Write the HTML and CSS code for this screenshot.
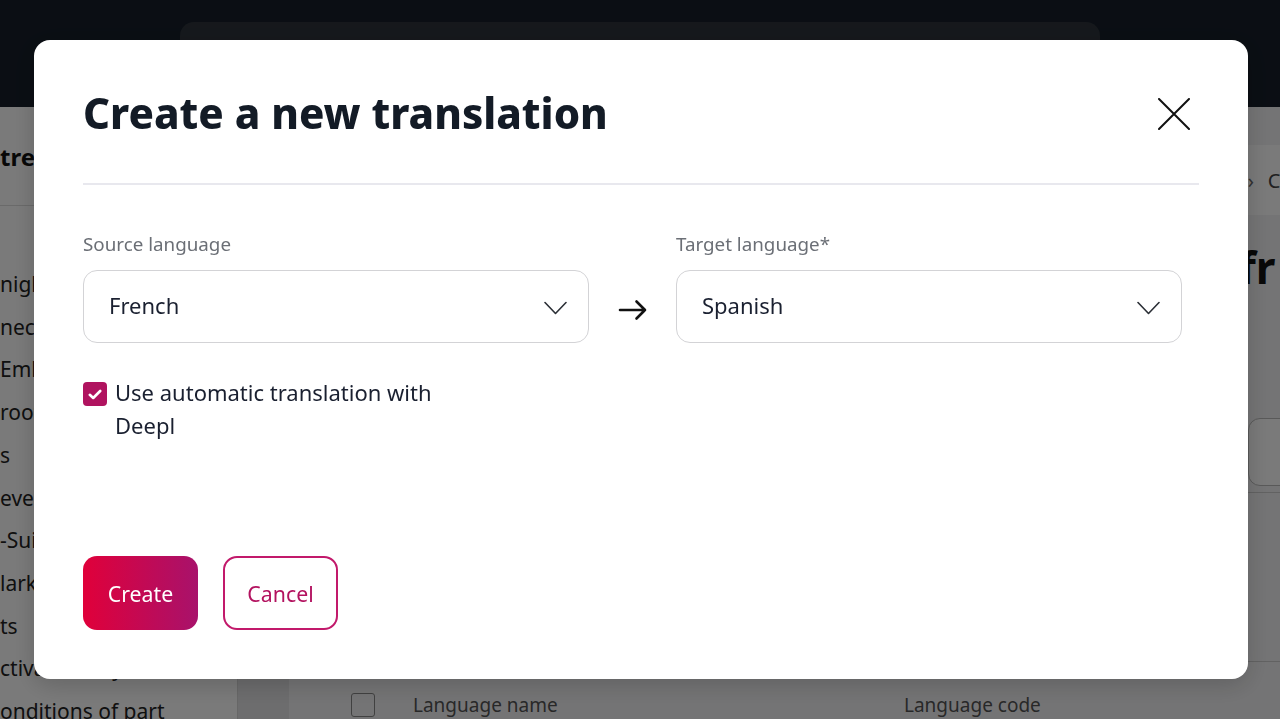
FILE: index.html
```html
<!DOCTYPE html>
<html lang="en">
  <head>
    <meta charset="UTF-8" />
    <meta name="viewport" content="width=device-width, initial-scale=1.0" />
    <title>Create a new translation</title>
    <link rel="stylesheet" href="styles.css">
  </head>
  <body>
    <header class="topbar">
      <div class="search-bar"></div>
    </header>

    <div class="layout">
      <aside class="sidebar">
        <div class="sidebar-title">tree</div>
        <ul class="sidebar-list">
          <li>nights</li>
          <li>nection</li>
          <li>Embed</li>
          <li>rooting</li>
          <li>s</li>
          <li>events</li>
          <li>-Suite</li>
          <li>larkets</li>
          <li>ts</li>
          <li>ctivation key</li>
          <li>onditions of part</li>
        </ul>
      </aside>
      <div class="rail"></div>
      <main class="main">
        <nav class="breadcrumb">
          <span>Pages</span>
          <span class="sep">&rsaquo;</span>
          <span>Translations</span>
          <span class="sep">&rsaquo;</span>
          <span>Content</span>
        </nav>
        <h1 class="page-title">Translations of the homepage fr</h1>
        <div class="toolbar">
          <div class="toolbar-box"></div>
        </div>
        <div class="table">
          <div class="table-head">
            <span class="table-check"></span>
            <span class="col-name">Language name</span>
            <span class="col-code">Language code</span>
          </div>
        </div>
      </main>
    </div>

    <div class="overlay">
      <div class="modal">
        <div class="modal-header">
          <h2 class="modal-title">Create a new translation</h2>
          <button class="close-btn" aria-label="Close">
            <svg width="32" height="32" viewBox="0 0 32 32" fill="none" stroke="#111" stroke-width="2" stroke-linecap="round">
              <path d="M1 1 L31 31 M31 1 L1 31" />
            </svg>
          </button>
        </div>

        <div class="modal-body">
          <div class="lang-row">
            <div class="field">
              <label class="field-label">Source language</label>
              <div class="select">
                <span>French</span>
                <svg class="chevron" width="23" height="14" viewBox="0 0 23 14" fill="none" stroke="#2b2f36" stroke-width="1.6" stroke-linecap="round" stroke-linejoin="round">
                  <path d="M1 1.5 L11.5 12.5 L22 1.5" />
                </svg>
              </div>
            </div>
            <div class="arrow">
              <svg width="30" height="22" viewBox="0 0 30 22" fill="none" stroke="#111" stroke-width="2.6" stroke-linecap="round" stroke-linejoin="round">
                <path d="M2 11 H27 M18.5 2.5 L27 11 L18.5 19.5" />
              </svg>
            </div>
            <div class="field">
              <label class="field-label">Target language*</label>
              <div class="select">
                <span>Spanish</span>
                <svg class="chevron" width="23" height="14" viewBox="0 0 23 14" fill="none" stroke="#2b2f36" stroke-width="1.6" stroke-linecap="round" stroke-linejoin="round">
                  <path d="M1 1.5 L11.5 12.5 L22 1.5" />
                </svg>
              </div>
            </div>
          </div>

          <label class="checkbox">
            <span class="checkbox-box">
              <svg width="14" height="11" viewBox="0 0 14 11" fill="none" stroke="#fff" stroke-width="2.6" stroke-linecap="round" stroke-linejoin="round">
                <path d="M1.8 5.8 L5.2 9 L12.2 2" />
              </svg>
            </span>
            <span class="checkbox-text">Use automatic translation with Deepl</span>
          </label>
        </div>

        <div class="modal-footer">
          <button class="btn btn-primary">Create</button>
          <button class="btn btn-outline">Cancel</button>
        </div>
      </div>
    </div>
  </body>
</html>
```

FILE: styles.css
```css
body {
  font-family: "Noto Sans", "Open Sans", sans-serif;
  margin: 0;
  padding: 0;
  height: 100vh;
  overflow: hidden;
  background-color: #f3f3f5;
  color: #1a202c;
}
.topbar {
  height: 107px;
  background-color: #171f2a;
  padding-top: 22px;
  box-sizing: border-box;
}
.search-bar {
  margin-left: 180px;
  width: 920px;
  height: 64px;
  border-radius: 14px;
  background-color: #2e343c;
}
.layout {
  display: flex;
  height: calc(100vh - 107px);
}
.sidebar {
  width: 237px;
  background-color: #fff;
  flex-shrink: 0;
}
.sidebar-title {
  font-size: 24px;
  font-weight: bold;
  height: 98px;
  line-height: 100px;
  border-bottom: 1px solid #ddd;
  color: #111;
}
.sidebar-list {
  list-style: none;
  margin: 0;
  padding: 57px 0 0;
}
.sidebar-list li {
  font-size: 21px;
  line-height: 42.7px;
  color: #222;
  white-space: nowrap;
}
.rail {
  width: 51px;
  background-color: #e4e4e6;
  border-left: 1px solid #d8d8d8;
  flex-shrink: 0;
}
.main {
  flex: 1;
  display: flex;
  flex-direction: column;
  min-width: 0;
  overflow: hidden;
}
.main > * {
  flex-shrink: 0;
}
.breadcrumb {
  margin-top: 38px;
  height: 70px;
  background-color: #fff;
  display: flex;
  align-items: center;
  padding-left: 744px;
  font-size: 20px;
  color: #444;
  white-space: nowrap;
}
.breadcrumb .sep {
  margin: 0 14px 0 12px;
  color: #666;
}
.page-title {
  margin: 22px 0 0 283px;
  font-size: 44px;
  font-weight: bold;
  color: #111;
  white-space: nowrap;
}
.toolbar {
  margin-top: 121px;
  display: flex;
  justify-content: flex-end;
  padding-bottom: 6px;
  border-bottom: 1px solid #ccc;
}
.toolbar-box {
  width: 60px;
  height: 66px;
  margin-right: -30px;
  border: 1px solid #bbb;
  border-radius: 12px;
  background-color: #fff;
}
.table {
  margin-top: 168px;
  border-top: 1px solid #ccc;
}
.table-head {
  display: flex;
  align-items: center;
  height: 85px;
  padding-left: 62px;
  font-size: 19px;
  color: #555;
}
.table-check {
  width: 22px;
  height: 22px;
  border: 1.5px solid #888;
  border-radius: 3px;
  margin-right: 38px;
}
.col-name {
  width: 491px;
}

/* modal */
.overlay {
  position: fixed;
  inset: 0;
  background-color: rgba(0, 0, 0, 0.52);
  display: flex;
  align-items: center;
  justify-content: center;
}
.modal {
  width: 1214px;
  height: 639px;
  margin-left: 2px;
  background-color: #fff;
  border-radius: 16px;
  padding: 49px;
  box-sizing: border-box;
  display: flex;
  flex-direction: column;
  box-shadow: 0 6px 24px rgba(0, 0, 0, 0.18);
}
.modal-header {
  display: flex;
  align-items: center;
  justify-content: space-between;
  height: 48px;
  padding: 0 9px 46px 0;
  border-bottom: 2px solid #e8e8ee;
}
.modal-title {
  margin: 0;
  font-size: 42px;
  font-weight: 800;
  line-height: 48px;
  color: #131b26;
}
.close-btn {
  background: none;
  border: none;
  padding: 0;
  width: 32px;
  height: 32px;
  margin-top: 2px;
  cursor: pointer;
}
.close-btn svg {
  display: block;
}
.modal-body {
  padding-top: 47px;
}
.lang-row {
  display: grid;
  grid-template-columns: 506px 87px 506px;
  align-items: end;
}
.field {
  display: flex;
  flex-direction: column;
}
.field-label {
  font-size: 18.8px;
  line-height: 24px;
  color: #6b6f76;
  margin-bottom: 14px;
}
.select {
  height: 73px;
  border: 1px solid #d3d3d6;
  border-radius: 14px;
  box-sizing: border-box;
  display: flex;
  align-items: center;
  justify-content: space-between;
  padding: 0 21px 4px 25px;
  font-size: 22px;
  color: #1a2030;
}
.chevron {
  margin-top: 6px;
}
.arrow {
  height: 73px;
  display: flex;
  align-items: center;
  justify-content: center;
  padding-top: 6px;
  box-sizing: border-box;
}
.checkbox {
  display: flex;
  align-items: flex-start;
  margin-top: 33px;
  width: 380px;
}
.checkbox-box {
  width: 24px;
  height: 24px;
  border-radius: 4px;
  background-color: #b0135f;
  display: flex;
  align-items: center;
  justify-content: center;
  margin: 6px 8px 0 0;
  flex-shrink: 0;
}
.checkbox-text {
  font-size: 22px;
  line-height: 33px;
  color: #1a2030;
}
.modal-footer {
  margin-top: auto;
  display: flex;
  gap: 25px;
}
.btn {
  font-family: inherit;
  font-size: 21.3px;
  height: 74px;
  padding: 0;
  border-radius: 14px;
  cursor: pointer;
  box-sizing: border-box;
}
.btn-primary {
  border: none;
  color: #fff;
  background: linear-gradient(90deg, #e0003a, #a8126b);
  width: 115px;
}
.btn-outline {
  border: 2px solid #c2196b;
  background-color: #fff;
  color: #b3125f;
  width: 115px;
}
```
